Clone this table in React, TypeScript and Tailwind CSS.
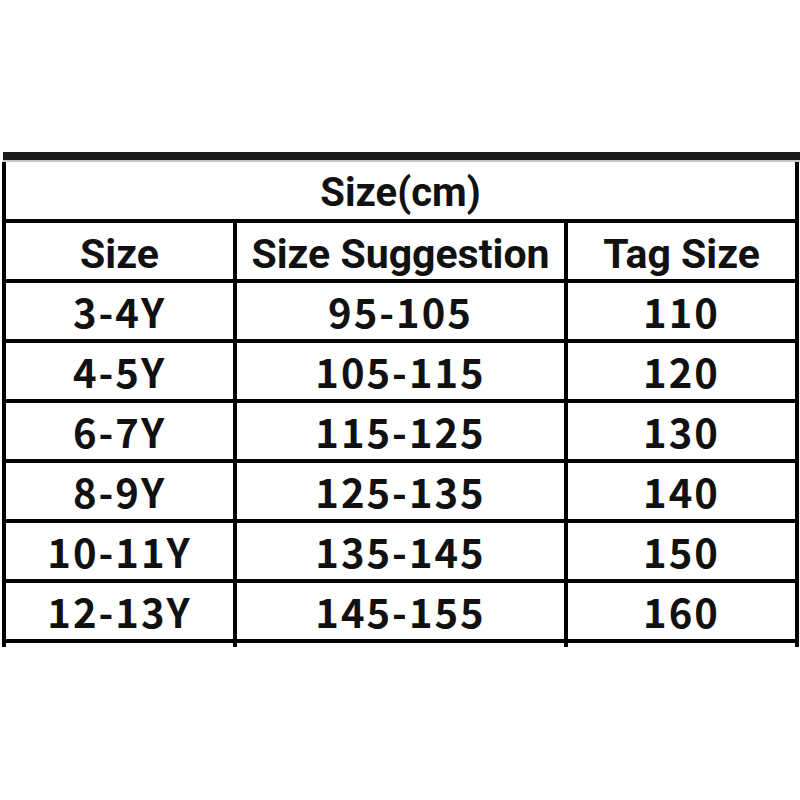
const rows = [
  ["3-4Y", "95-105", "110"],
  ["4-5Y", "105-115", "120"],
  ["6-7Y", "115-125", "130"],
  ["8-9Y", "125-135", "140"],
  ["10-11Y", "135-145", "150"],
  ["12-13Y", "145-155", "160"],
];

const cjk = { fontFamily: '"Noto Sans CJK SC", "Noto Sans", sans-serif' };
const latin = { fontFamily: 'Roboto, "Noto Sans", sans-serif' };

function Row({ cells, head }: { cells: string[]; head?: boolean }) {
  return (
    <div className="grid grid-cols-[231px_331px_227px] border-t-4 border-black">
      {cells.map((c, i) => (
        <div
          key={i}
          className={`flex h-[56px] items-center justify-center ${i < 2 ? "border-r-4 border-black" : ""}`}
        >
          <span
            style={head ? latin : cjk}
            className={
              head
                ? "pt-[6px] text-[41px] font-bold leading-none text-[#111]"
                : "text-[40px] font-bold leading-none tracking-[2px] text-[#111]"
            }
          >
            {c}
          </span>
        </div>
      ))}
    </div>
  );
}

export default function App() {
  return (
    <div className="h-[800px] w-[800px] bg-white pt-[152px]">
      <div className="ml-[3px] h-[8px] bg-[#1b1b1b]" />
      <div className="ml-[3px] h-[2px] bg-[#c8c8c8]" />
      <div className="ml-[2px] w-[797px] border-x-4 border-black">
        <div className="flex h-[57px] items-center justify-center">
          <span style={latin} className="pt-[4px] text-[40px] font-bold leading-none text-[#111]">
            Size(cm)
          </span>
        </div>
        <Row cells={["Size", "Size Suggestion", "Tag Size"]} head />
        {rows.map((r) => (
          <Row key={r[0]} cells={r} />
        ))}
        <div className="grid grid-cols-[231px_331px_227px] border-t-4 border-black">
          <div className="h-[4px] border-r-4 border-black" />
          <div className="h-[4px] border-r-4 border-black" />
          <div className="h-[4px]" />
        </div>
      </div>
    </div>
  );
}
